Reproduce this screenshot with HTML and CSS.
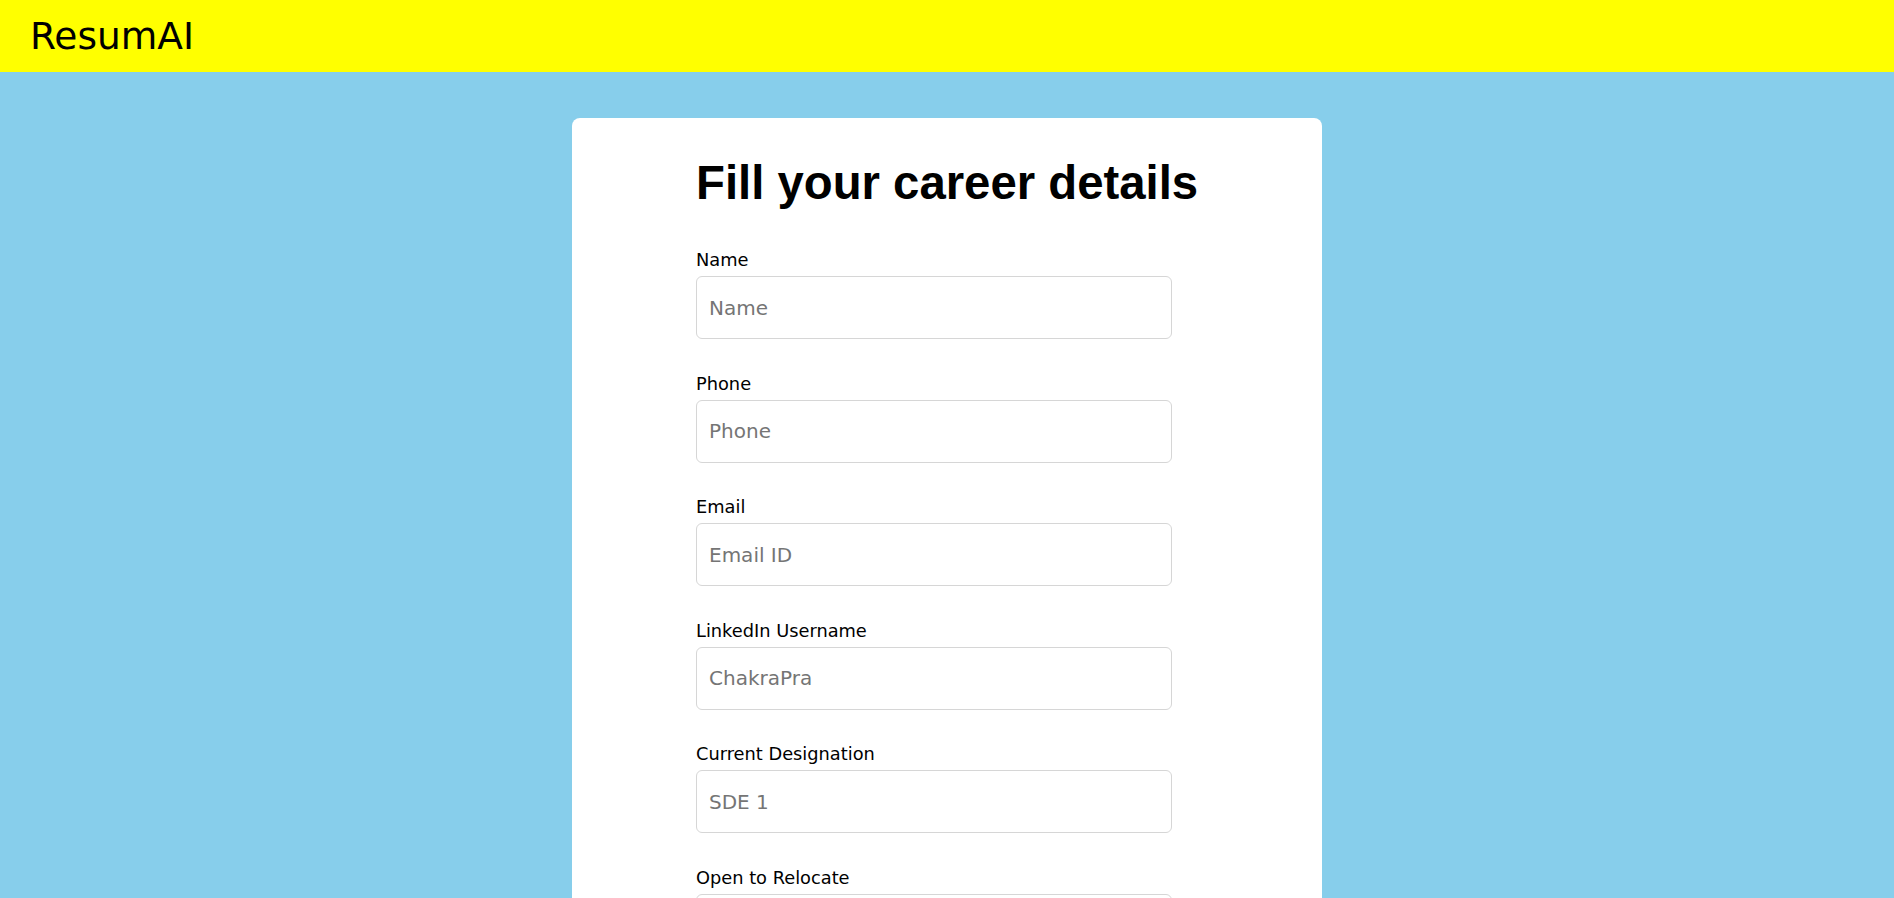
FILE: index.html
```html
<!DOCTYPE html>
<html lang="en">
<head>
<meta charset="utf-8">
<title>ResumAI</title>
<link rel="stylesheet" href="styles.css">
</head>
<body>
<header class="topbar">
  <div class="brand">ResumAI</div>
</header>
<main class="page">
  <section class="card">
    <h1 class="title">Fill your career details</h1>
    <form class="form">
      <div class="field">
        <label class="label" for="name">Name</label>
        <input class="input" id="name" type="text" placeholder="Name">
      </div>
      <div class="field">
        <label class="label" for="phone">Phone</label>
        <input class="input" id="phone" type="text" placeholder="Phone">
      </div>
      <div class="field">
        <label class="label" for="email">Email</label>
        <input class="input" id="email" type="text" placeholder="Email ID">
      </div>
      <div class="field">
        <label class="label" for="linkedin">LinkedIn Username</label>
        <input class="input" id="linkedin" type="text" placeholder="ChakraPra">
      </div>
      <div class="field">
        <label class="label" for="designation">Current Designation</label>
        <input class="input" id="designation" type="text" placeholder="SDE 1">
      </div>
      <div class="field">
        <label class="label" for="relocate">Open to Relocate</label>
        <input class="input" id="relocate" type="text" placeholder="Yes">
      </div>
    </form>
  </section>
</main>
</body>
</html>
```
FILE: styles.css
```css
html, body {
  margin: 0;
  padding: 0;
}

body {
  background: #87ceeb;
  font-family: "DejaVu Sans", "Noto Sans", sans-serif;
  color: #000;
}

.topbar {
  background: #ffff00;
  height: 72px;
  padding-left: 30px;
  display: flex;
  align-items: center;
}

.brand {
  font-family: "DejaVu Sans", sans-serif;
  font-size: 37.5px;
  line-height: 72px;
  color: #000;
}

.page {
  display: flex;
  justify-content: center;
  padding-top: 46px;
}

.card {
  width: 750px;
  box-sizing: border-box;
  background: #fff;
  border-radius: 8px;
  padding: 38px 0 40px 124px;
}

.title {
  margin: 0 0 38px 0;
  font-family: "Liberation Sans", Arial, sans-serif;
  font-weight: 700;
  font-size: 47.3px;
  line-height: 54px;
  color: #000;
  white-space: nowrap;
}

.form {
  display: flex;
  flex-direction: column;
  width: 476px;
}

.field {
  display: flex;
  flex-direction: column;
  margin-bottom: 32.5px;
}

.label {
  font-size: 17.8px;
  line-height: 24px;
  margin-bottom: 4px;
  color: #000;
}

.input {
  box-sizing: border-box;
  width: 476px;
  height: 63px;
  border: 1px solid #d6d6d6;
  border-radius: 6px;
  padding: 0 12px;
  font-family: "DejaVu Sans", sans-serif;
  font-size: 20px;
  color: #000;
  background: #fff;
  outline: none;
}

.input::placeholder {
  color: #757575;
}
```
